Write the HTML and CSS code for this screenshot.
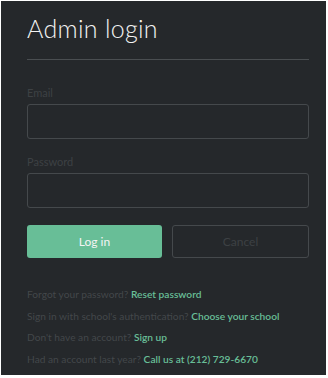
FILE: index.html
```html
<!DOCTYPE html>
<html lang="en">
<head>
    <meta charset="UTF-8">
    <title>Admin login</title>
    <link rel="stylesheet" href="styles.css">
</head>
<body>
    <div class="panel">
        <h1 class="title">Admin login</h1>
        <hr class="divider">

        <form class="login-form">
            <div class="form-group">
                <label>Email</label>
                <input type="email">
            </div>
            <div class="form-group">
                <label>Password</label>
                <input type="password">
            </div>
            <div class="button-row">
                <button type="submit" class="btn btn-primary">Log in</button>
                <button type="button" class="btn btn-outline">Cancel</button>
            </div>
        </form>

        <ul class="help-links">
            <li>Forgot your password? <a href="#">Reset password</a></li>
            <li>Sign in with school's authentication? <a href="#">Choose your school</a></li>
            <li>Don't have an account? <a href="#">Sign up</a></li>
            <li>Had an account last year? <a href="#">Call us at (212) 729-6670</a></li>
        </ul>
    </div>
</body>
</html>
```

FILE: styles.css
```css
body {
    margin: 0;
    padding: 1px 2px 3px 1px;
    background: #ffffff;
    font-family: 'Lato', 'Open Sans', sans-serif;
}

.panel {
    height: 374px;
    box-sizing: border-box;
    padding: 12px 17px 0 26px;
    background: #25282b;
}

.title {
    margin: 0;
    font-size: 25px;
    font-weight: 300;
    letter-spacing: 0.3px;
    line-height: 30px;
    color: #f2f2f2;
}

.divider {
    margin: 16px 0 0;
    border: none;
    border-top: 1px solid #4a4e51;
}

.login-form {
    margin-top: 26px;
}

.form-group {
    margin-bottom: 16px;
}

.form-group label {
    display: block;
    font-size: 11px;
    line-height: 14px;
    margin-bottom: 4px;
    color: #3d4144;
}

.form-group input {
    display: block;
    width: 100%;
    height: 35px;
    box-sizing: border-box;
    border: 1.5px solid #45494c;
    border-radius: 3px;
    background: transparent;
    color: #ffffff;
}

.button-row {
    display: flex;
    gap: 10px;
    margin-top: 17px;
}

.btn {
    flex: 1;
    height: 33px;
    border-radius: 3px;
    font-family: inherit;
    font-size: 12px;
    cursor: pointer;
}

.btn-primary {
    border: none;
    background: #68be97;
    color: #f4f4f4;
}

.btn-outline {
    border: 1.5px solid #45494c;
    background: transparent;
    color: #3d4144;
}

.help-links {
    list-style: none;
    margin: 26px 0 0;
    padding: 0;
    font-size: 10.2px;
    line-height: 21.5px;
    color: #43474a;
}

.help-links a {
    color: #68be97;
    font-weight: 600;
    text-decoration: none;
}
```
